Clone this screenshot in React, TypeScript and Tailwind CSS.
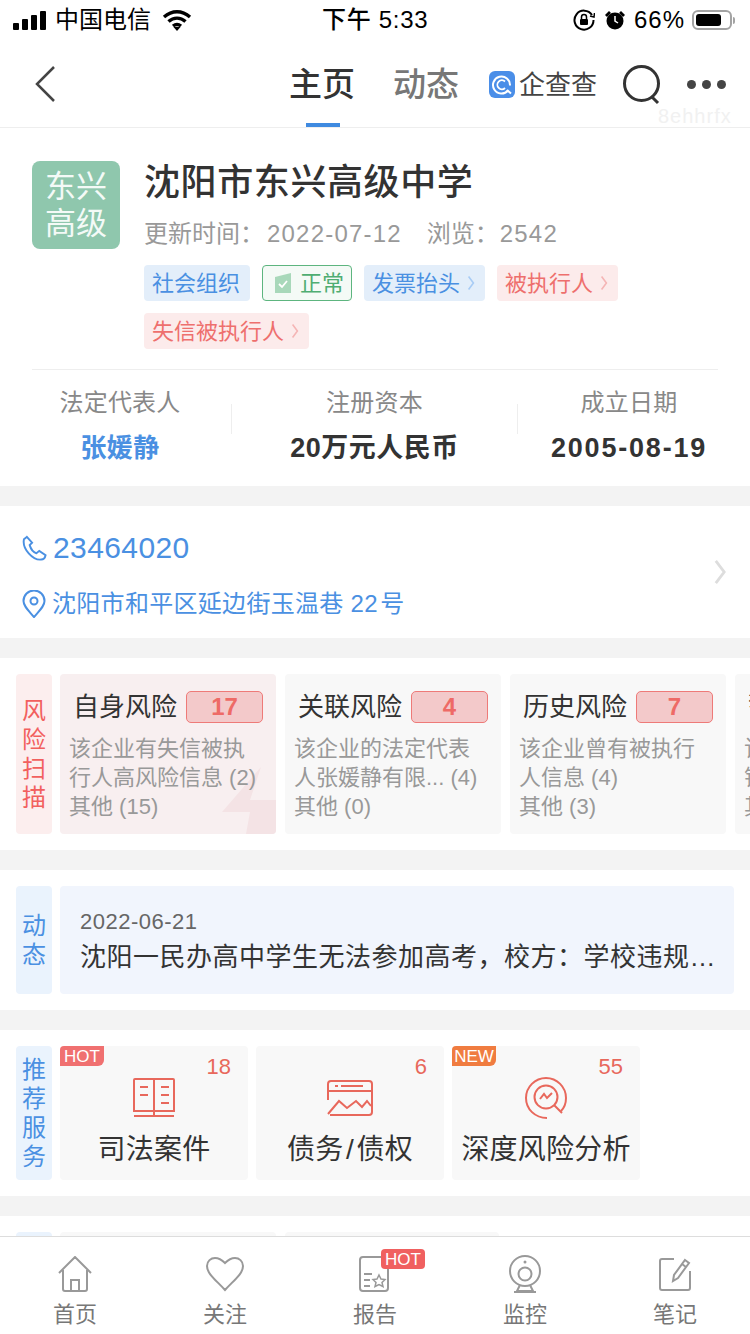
import React from "react";

const risks = [
  { title: "自身风险", count: 17, lines: ["该企业有失信被执", "行人高风险信息 (2)", "其他 (15)"], hot: true },
  { title: "关联风险", count: 4, lines: ["该企业的法定代表", "人张媛静有限... (4)", "其他 (0)"] },
  { title: "历史风险", count: 7, lines: ["该企业曾有被执行", "人信息 (4)", "其他 (3)"] },
  { title: "警示提醒", count: 9, lines: ["该企业有", "销售风险", "其他 (1)"] },
];

const Chevron = ({ className }: { className: string }) => (
  <svg viewBox="0 0 10 20" className={className} fill="none" stroke="currentColor" strokeWidth="2">
    <path d="M2 2l6 8-6 8" />
  </svg>
);

const Tag = ({ label, tone, arrow }: { label: string; tone: "blue" | "red"; arrow?: boolean }) => (
  <div
    className={
      tone === "blue"
        ? "flex h-[36px] items-center rounded-[4px] bg-[#e3eefa] pl-[8px] pr-[10px] text-[22px] text-[#4a90e2]"
        : "flex h-[36px] items-center rounded-[4px] bg-[#fcebeb] pl-[8px] pr-[10px] text-[22px] text-[#ee6f6d]"
    }
  >
    {label}
    {arrow && (
      <Chevron
        className={
          tone === "blue"
            ? "ml-[7px] h-[16px] w-[8px] text-[#a8ccf5]"
            : "ml-[7px] h-[16px] w-[8px] text-[#f5b5b5]"
        }
      />
    )}
  </div>
);

const SideLabel = ({ chars, tone, className }: { chars: string[]; tone: "red" | "blue"; className: string }) => (
  <div
    className={
      (tone === "red" ? "bg-[#fceeee] text-[#f2605e] " : "bg-[#eaf3fd] text-[#4a90e2] ") +
      "flex w-[36px] shrink-0 flex-col items-center justify-center rounded-[4px] text-[24px] leading-[29px] " +
      className
    }
  >
    {chars.map((c) => (
      <span key={c}>{c}</span>
    ))}
  </div>
);

const Divider = () => <div className="h-[20px] bg-[#f3f3f3]" />;

const BookIcon = () => (
  <svg viewBox="0 0 44 40" className="h-[40px] w-[44px]" fill="none" stroke="#e8685c" strokeWidth="2">
    <path d="M3 1h38a1 1 0 0 1 1 1v31H2V2a1 1 0 0 1 1-1zM22 1v38M2 38h40" />
    <path d="M8 9h8M8 17h8M29 9h8M29 17h8M29 25h8" />
  </svg>
);

const DebtIcon = () => (
  <svg viewBox="0 0 46 36" className="h-[36px] w-[46px]" fill="none" stroke="#e8685c" strokeWidth="2">
    <path d="M1 20V4a3 3 0 0 1 3-3h38a3 3 0 0 1 3 3v28a3 3 0 0 1-3 3H3" />
    <path d="M1 11h44M8 6h3M14 6h22" />
    <path d="M1 34l11-13 8 7 9-7 6 6 5-6 4 5" />
  </svg>
);

const ScanIcon = () => (
  <svg viewBox="0 0 44 42" className="h-[42px] w-[44px]" fill="none" stroke="#e8685c" strokeWidth="2">
    <path d="M23 41C11 41 2 32 2 21S11 1 22 1s20 9 20 20c0 5-2 10-5 13" />
    <circle cx="22" cy="20" r="11.5" />
    <path d="M16 22l4-5 3 4 5-5M30 28l8 8" />
  </svg>
);

const services = [
  { name: "司法案件", count: "18", badge: "HOT", icon: <BookIcon /> },
  { name: "债务\u200a/\u200a债权", count: "6", icon: <DebtIcon /> },
  { name: "深度风险分析", count: "55", badge: "NEW", icon: <ScanIcon /> },
];

const tabIcon = "h-[36px] w-[36px]";
const tabs = [
  {
    label: "首页",
    icon: (
      <svg viewBox="0 0 36 36" className={tabIcon} fill="none" stroke="#999" strokeWidth="2">
        <path d="M2 17L18 1l16 16M6 14v19a2 2 0 0 0 2 2h20a2 2 0 0 0 2-2V14M14 35V24h8v11" />
      </svg>
    ),
  },
  {
    label: "关注",
    icon: (
      <svg viewBox="0 0 40 36" className="h-[36px] w-[40px]" fill="none" stroke="#999" strokeWidth="2">
        <path d="M20 34C12 25 2 18 2 10c0-5 4-8 8-8 5 0 8 3 10 5 2-2 5-5 10-5 4 0 8 3 8 8 0 8-10 15-18 24z" />
      </svg>
    ),
  },
  {
    label: "报告",
    icon: (
      <svg viewBox="0 0 36 36" className={tabIcon} fill="none" stroke="#999" strokeWidth="2">
        <path d="M6 1h22a3 3 0 0 1 3 3v28a3 3 0 0 1-3 3H6a3 3 0 0 1-3-3V4a3 3 0 0 1 3-3z" />
        <path d="M7 18h8M7 24h6M7 30h6" />
        <path d="M22 19l2 4 4 .5-3 3 1 4-4-2-4 2 1-4-3-3 4-.5z" strokeWidth="1.5" />
      </svg>
    ),
  },
  {
    label: "监控",
    icon: (
      <svg viewBox="0 0 36 38" className="h-[38px] w-[36px]" fill="none" stroke="#999" strokeWidth="2">
        <ellipse cx="18" cy="16" rx="15" ry="15" />
        <circle cx="18" cy="19" r="6.5" />
        <circle cx="18" cy="7" r="1.5" fill="#999" stroke="none" />
        <path d="M13 30l-3 6h16l-3-6M7 37h22" />
      </svg>
    ),
  },
  {
    label: "笔记",
    icon: (
      <svg viewBox="0 0 36 36" className={tabIcon} fill="none" stroke="#999" strokeWidth="2">
        <path d="M17 3H5a2 2 0 0 0-2 2v27a2 2 0 0 0 2 2h26a2 2 0 0 0 2-2V15" />
        <path d="M28 4l4 3-11 15-5 3 1-6zM25 8l4 3" />
      </svg>
    ),
  },
];

export default function App() {
  return (
    <div className="flex h-[1334px] w-[750px] flex-col overflow-hidden bg-white font-['Liberation_Sans','Noto_Sans_CJK_SC',sans-serif]">
      {/* status bar */}
      <div className="flex h-[40px] shrink-0 items-center pl-[13px] text-[24px] text-black">
        <div className="flex items-end gap-[3px]">
          <div className="h-[7px] w-[6px] rounded-[1px] bg-black" />
          <div className="h-[11px] w-[6px] rounded-[1px] bg-black" />
          <div className="h-[15px] w-[6px] rounded-[1px] bg-black" />
          <div className="h-[19px] w-[6px] rounded-[1px] bg-black" />
        </div>
        <span className="ml-[9px] w-[96px]">中国电信</span>
        <svg viewBox="0 0 30 22" className="ml-[11px] h-[22px] w-[30px]" fill="none" stroke="black" strokeWidth="3.4">
          <path d="M2 8c8-7 18-7 26 0M6.5 12.5c5-4.5 12-4.5 17 0M11 17c2.500-2 5.500-2 8 0" />
          <path d="M15 22l-3.500-4h7z" fill="black" stroke="none" />
        </svg>
        <span className="ml-[130px] w-[105px] whitespace-nowrap font-medium tracking-[0.7px]">下午 5:33</span>
        <svg viewBox="0 0 22 22" className="ml-[146px] h-[22px] w-[22px]" fill="none" stroke="black" strokeWidth="2">
          <path d="M19 6a9.500 9.500 0 1 0 1.500 5" />
          <path d="M17 7l4 1 .5-4" strokeWidth="1.500" />
          <rect x="7" y="10" width="8" height="6" rx="1" fill="black" stroke="none" />
          <path d="M8.500 10V8a2.500 2.500 0 0 1 5 0v2" strokeWidth="1.500" />
        </svg>
        <svg viewBox="0 0 22 22" className="ml-[9px] h-[22px] w-[22px]" fill="black">
          <circle cx="11" cy="12" r="8.500" />
          <path d="M1 6l4-4 2 2-4 4zM21 6l-4-4-2 2 4 4z" />
          <path d="M11 7v5l3 2" stroke="white" strokeWidth="1.500" fill="none" />
        </svg>
        <span className="ml-[8px] w-[51px] tracking-[1px]">66%</span>
        <div className="ml-[7px] flex h-[20px] w-[40px] items-center rounded-[6px] border-2 border-[#a3a3a3] p-[2px]">
          <div className="h-full w-[25px] rounded-[3px] bg-black" />
        </div>
        <div className="ml-[1px] h-[7px] w-[2px] rounded-r-[2px] bg-[#a3a3a3]" />
      </div>

      {/* nav */}
      <div className="relative flex h-[88px] shrink-0 items-center border-b border-[#eeeeee] pl-[35px] pt-[2px]">
        <svg viewBox="0 0 20 36" className="-mt-[2px] h-[36px] w-[20px]" fill="none" stroke="#444" strokeWidth="2.500">
          <path d="M19 1L2 18l17 17" />
        </svg>
        <span className="ml-[234px] text-[33px] font-medium leading-none text-[#333]">主页</span>
        <span className="ml-[38px] text-[33px] font-medium leading-none text-[#777]">动态</span>
        <svg viewBox="0 0 26 27" className="ml-[30px] h-[27px] w-[26px]">
          <rect width="26" height="27" rx="6" fill="#4a8ee8" />
          <path d="M19 19.500a8.500 8.500 0 1 1 2-5" fill="none" stroke="white" strokeWidth="2" />
          <path d="M16 10.500a4.500 4.500 0 1 0 0 6.500" fill="none" stroke="white" strokeWidth="1.800" />
          <path d="M18 19l4 3.500" stroke="white" strokeWidth="2" />
        </svg>
        <span className="ml-[4px] w-[80px] whitespace-nowrap text-[26px] leading-none text-[#444]">企查查</span>
        <svg viewBox="0 0 38 40" className="ml-[24px] h-[40px] w-[38px]" fill="none" stroke="#333" strokeWidth="3">
          <circle cx="18.500" cy="18.500" r="17" />
          <path d="M29 32l6 6" />
        </svg>
        <div className="ml-[26px] flex gap-[6px]">
          <div className="h-[9px] w-[9px] rounded-full bg-[#444]" />
          <div className="h-[9px] w-[9px] rounded-full bg-[#444]" />
          <div className="h-[9px] w-[9px] rounded-full bg-[#444]" />
        </div>
        <div className="absolute bottom-0 left-[306px] h-[4px] w-[34px] bg-[#3f8ae0]" />
        <span className="absolute left-[658px] top-[66px] text-[20px] leading-none tracking-[1px] text-[#f1f1f1]">8ehhrfx</span>
      </div>

      <div className="min-h-0 flex-1 overflow-hidden">
        {/* company header */}
        <div className="h-[358px] pt-[33px]">
          <div className="flex pl-[32px]">
            <div className="flex h-[88px] w-[88px] shrink-0 flex-col items-center justify-center rounded-[8px] bg-[#8fc7ad] text-[31px] leading-[37px] text-[#f4faf7]">
              <span>东兴</span>
              <span>高级</span>
            </div>
            <div className="ml-[24px] min-w-0 flex-1">
              <div className="text-[36px] font-medium leading-[44px] tracking-[0.6px] text-[#333]">沈阳市东兴高级中学</div>
              <div className="mt-[12px] flex h-[34px] items-center text-[24px] text-[#999]">
                <span>更新时间：</span>
                <span className="ml-[3px] tracking-[1.200px]">2022-07-12</span>
                <span className="ml-[25px]">浏览：</span>
                <span className="ml-[1px] tracking-[1.200px]">2542</span>
              </div>
              <div className="mt-[14px] flex w-[520px] flex-wrap gap-x-[12px] gap-y-[12px]">
                <Tag label="社会组织" tone="blue" />
                <div className="flex h-[36px] w-[90px] items-center rounded-[4px] border border-[#5db57f] bg-[#f4faf6] pl-[11px] text-[22px] text-[#4fad72]">
                  <svg viewBox="0 0 18 20" className="h-[20px] w-[18px]">
                    <path d="M1 4l16-4v20H1z" fill="#a8d8ba" />
                    <path d="M5 11l3 3 5-6" fill="none" stroke="white" strokeWidth="1.800" />
                  </svg>
                  <span className="ml-[8px] whitespace-nowrap">正常</span>
                </div>
                <Tag label="发票抬头" tone="blue" arrow />
                <Tag label="被执行人" tone="red" arrow />
                <Tag label="失信被执行人" tone="red" arrow />
              </div>
            </div>
          </div>
          <div className="mx-[32px] mt-[20px] border-t border-[#eeeeee]" />
          <div className="flex pl-[9px] pt-[13px]">
            <div className="flex w-[222px] flex-col items-center">
              <span className="text-[24px] leading-[40px] tracking-[0.2px] text-[#888]">法定代表人</span>
              <span className="mt-[5px] text-[26px] font-bold leading-[40px] tracking-[0.3px] text-[#4a90e2]">张媛静</span>
            </div>
            <div className="mt-[21px] h-[30px] w-px bg-[#eeeeee]" />
            <div className="flex w-[285px] flex-col items-center">
              <span className="text-[24px] leading-[40px] tracking-[0.2px] text-[#888]">注册资本</span>
              <span className="mt-[5px] text-[27px] font-bold leading-[40px] tracking-[0.5px] text-[#333]">20万元人民币</span>
            </div>
            <div className="mt-[21px] h-[30px] w-px bg-[#eeeeee]" />
            <div className="flex w-[222px] flex-col items-center">
              <span className="text-[24px] leading-[40px] tracking-[0.2px] text-[#888]">成立日期</span>
              <span className="mt-[5px] text-[27px] font-bold leading-[40px] tracking-[1.800px] text-[#333]">2005-08-19</span>
            </div>
          </div>
        </div>
        <Divider />

        {/* contact */}
        <div className="flex h-[132px] items-center pl-[22px] pr-[23px] text-[#4a90e2]">
          <div className="flex-1 pt-[8px]">
            <div className="flex h-[40px] items-center">
              <svg viewBox="0 0 26 26" className="h-[26px] w-[25px]" fill="none" stroke="#4a90e2" strokeWidth="2">
                <path d="M5 1.500L2 4c-1 5 1 10 5 14.500s9 7 13 6.500c2 0 4-2 4.500-4.500L18 16l-3 2.500c-3-1-6-5-7-8.500l2.500-2.500z" />
              </svg>
              <span className="ml-[6px] text-[30px] leading-none tracking-[0.400px]">23464020</span>
            </div>
            <div className="mt-[16px] flex h-[40px] items-center">
              <svg viewBox="0 0 24 28" className="h-[28px] w-[24px]" fill="none" stroke="#4a90e2" strokeWidth="2">
                <path d="M12 27C6 20 1.500 16 1.500 11a10.500 10.500 0 0 1 21 0c0 5-4.500 9-10.500 16z" />
                <circle cx="12" cy="11" r="3.500" />
              </svg>
              <span className="ml-[6px] text-[24px] leading-none tracking-[0.300px]">沈阳市和平区延边街玉温巷 22{"\u200a"}号</span>
            </div>
          </div>
          <Chevron className="h-[28px] w-[14px] text-[#dddddd]" />
        </div>
        <Divider />

        {/* risk scan */}
        <div className="flex h-[192px] gap-[8px] overflow-hidden pl-[16px] pt-[16px]">
          <SideLabel chars={["风", "险", "扫", "描"]} tone="red" className="h-[160px]" />
          <div className="flex gap-[9px]">
            {risks.map((r) => (
              <div
                key={r.title}
                className={
                  (r.hot ? "bg-[#f8eff0] " : "bg-[#f8f8f8] ") +
                  "relative h-[160px] w-[216px] shrink-0 overflow-hidden rounded-[4px] pl-[9px] pt-[17px]"
                }
              >
                {r.hot && (
                  <svg viewBox="0 0 56 70" className="absolute bottom-0 right-0 h-[70px] w-[56px]">
                    <path d="M41 3L2 48h28l-4 22h30V36H30z" fill="#f4e3e5" />
                  </svg>
                )}
                <div className="relative flex h-[32px] items-center">
                  <span className="ml-[4px] w-[104px] whitespace-nowrap text-[26px] leading-none text-[#333]">{r.title}</span>
                  <div className="ml-[9px] flex h-[32px] w-[77px] items-center justify-center rounded-[5px] border border-[#ee7a78] bg-[#f3c9ca] text-[24px] font-bold leading-none text-[#ee6a66]">
                    {r.count}
                  </div>
                </div>
                <div className="relative mt-[11px] whitespace-nowrap text-[22px] leading-[29px] text-[#999]">
                  {r.lines.map((l) => (
                    <div key={l}>{l}</div>
                  ))}
                </div>
              </div>
            ))}
          </div>
        </div>
        <Divider />

        {/* news */}
        <div className="flex h-[140px] gap-[8px] pl-[16px] pr-[16px] pt-[16px]">
          <SideLabel chars={["动", "态"]} tone="blue" className="h-[108px]" />
          <div className="flex h-[108px] min-w-0 flex-1 flex-col justify-center rounded-[4px] bg-[#f1f5fd] pl-[20px] pr-[18px]">
            <div className="text-[22px] leading-[34px] tracking-[0.500px] text-[#666]">2022-06-21</div>
            <div className="whitespace-nowrap text-[26px] leading-[36px] tracking-[0.5px] text-[#333]">沈阳一民办高中学生无法参加高考，校方：学校违规…</div>
          </div>
        </div>
        <Divider />

        {/* services */}
        <div className="flex h-[166px] gap-[8px] pl-[16px] pt-[16px]">
          <SideLabel chars={["推", "荐", "服", "务"]} tone="blue" className="h-[134px]" />
          <div className="flex gap-[8px]">
            {services.map((s) => (
              <div key={s.name} className="relative flex h-[134px] w-[188px] flex-col items-center rounded-[4px] bg-[#f8f8f8]">
                {s.badge && (
                  <div
                    className={
                      (s.badge === "HOT" ? "bg-[#f07070] " : "bg-[#f07c40] ") +
                      "absolute left-0 top-0 flex h-[20px] w-[44px] items-center justify-center rounded-br-[6px] rounded-tl-[4px] text-[17px] leading-none text-white"
                    }
                  >
                    {s.badge}
                  </div>
                )}
                <span className="absolute right-[17px] top-[8px] text-[22px] leading-[26px] text-[#e8685c]">{s.count}</span>
                <div className="mt-[31px] flex h-[42px] items-center">{s.icon}</div>
                <span className="mt-[11px] whitespace-nowrap text-[28px] leading-[40px] tracking-[0.2px] text-[#333]">{s.name}</span>
              </div>
            ))}
          </div>
        </div>
        <Divider />
        <div className="flex gap-[8px] pl-[16px] pt-[16px]">
          <div className="h-[40px] w-[36px] rounded-[4px] bg-[#eaf3fd]" />
          <div className="h-[40px] w-[216px] rounded-[4px] bg-[#f8f8f8]" />
          <div className="ml-px h-[40px] w-[214px] rounded-[4px] bg-[#f8f8f8]" />
        </div>
      </div>

      {/* bottom tabs */}
      <div className="relative z-10 flex h-[98px] shrink-0 border-t border-[#dddddd] bg-white">
        {tabs.map((t) => (
          <div key={t.label} className="relative flex w-[150px] flex-col items-center">
            <div className="mt-[18px] flex h-[38px] items-center">{t.icon}</div>
            <span className="mt-[8px] text-[22px] leading-[28px] text-[#777]">{t.label}</span>
            {t.label === "报告" && (
              <div className="absolute left-[81px] top-[12px] flex h-[20px] w-[44px] items-center justify-center rounded-[4px] bg-[#f06060] text-[17px] leading-none text-white">
                HOT
              </div>
            )}
          </div>
        ))}
      </div>
    </div>
  );
}
